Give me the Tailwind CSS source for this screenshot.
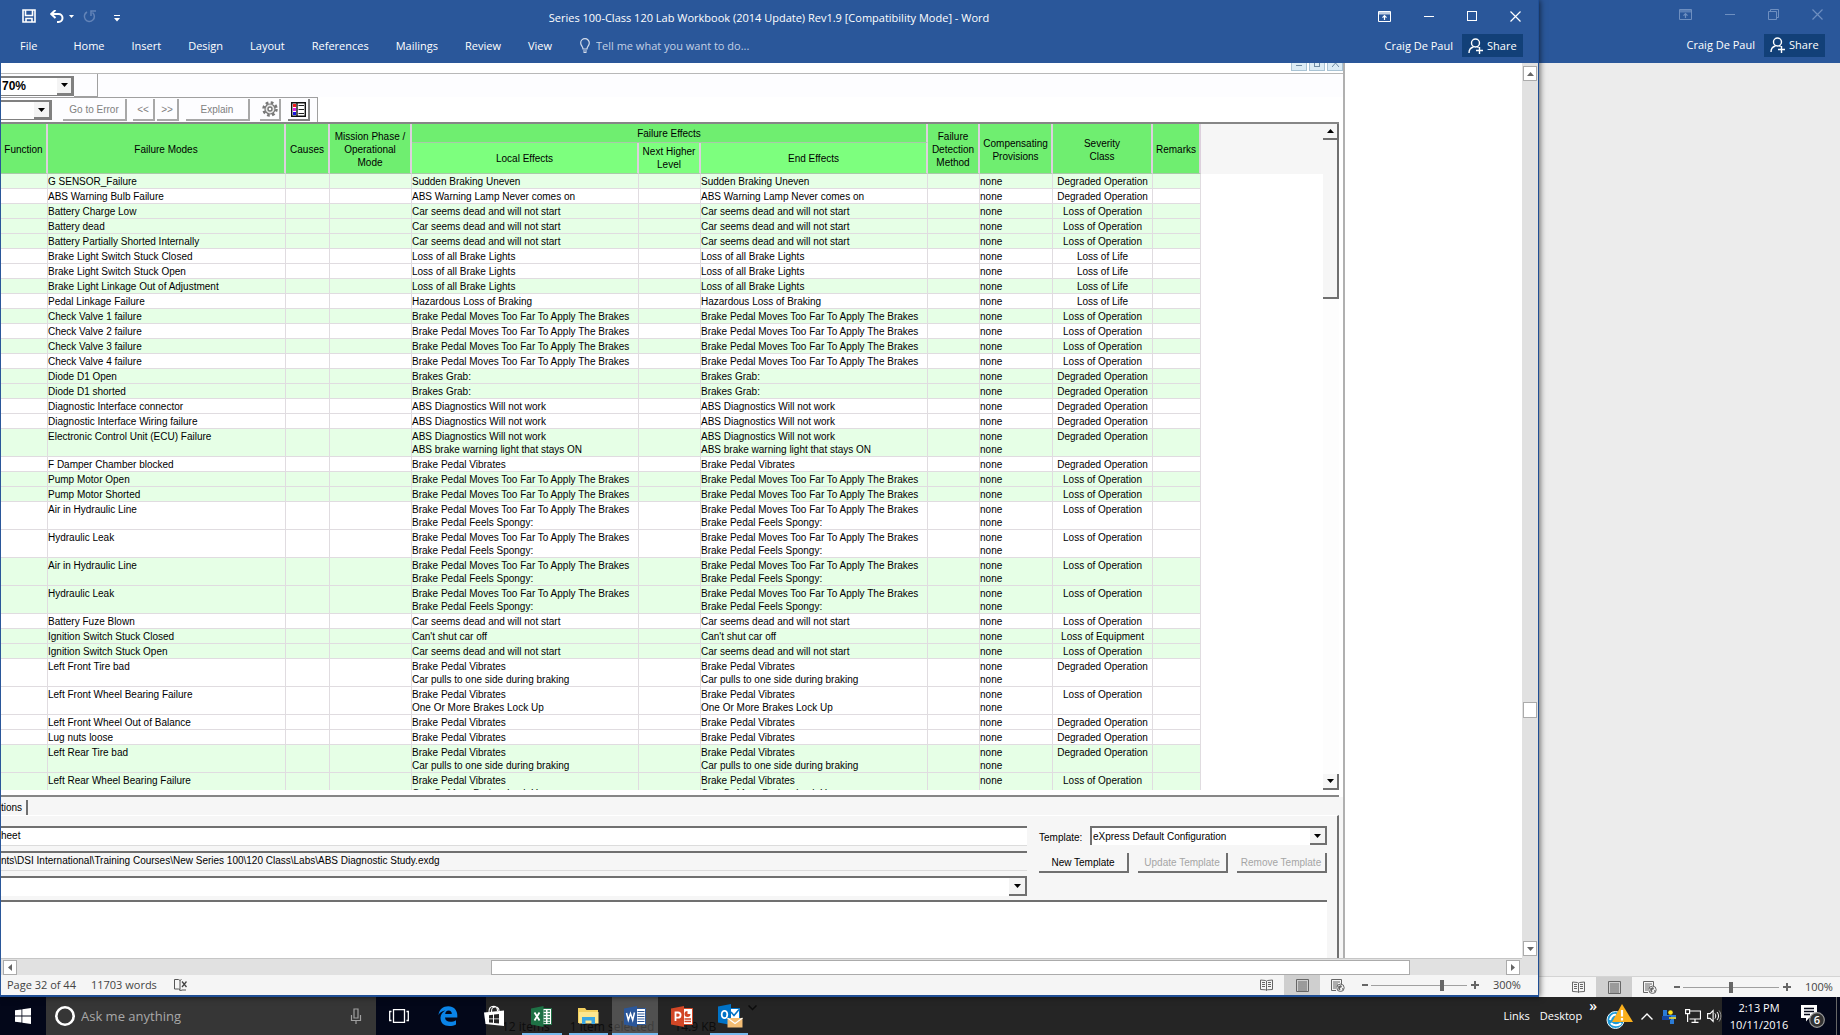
<!DOCTYPE html>
<html lang="en">
<head>
    <meta charset="UTF-8">
    <meta name="viewport" content="width=device-width, initial-scale=1.0">
    <title>Series 100-Class 120 Lab Workbook (2014 Update) Rev1.9 [Compatibility Mode] - Word</title>
    <script src="https://cdn.jsdelivr.net/npm/@tailwindcss/browser@4"></script>
</head>
<body class="h-screen flex flex-col overflow-hidden bg-[#ececec] font-['Open_Sans',sans-serif] text-[11px] leading-4">
    <!-- Shared icons -->
    <svg class="hidden">
        <symbol id="ribbon" viewBox="0 0 13 11"><path d="M.5.5h12v10H.5z" fill="none" stroke="currentColor"/><path d="M1 1h11v2.500H1z" fill="currentColor" opacity=".7"/><path d="M6.500 9V5M4.500 6.700l2-2 2 2" fill="none" stroke="currentColor" stroke-width="1.200"/></symbol>
        <symbol id="close" viewBox="0 0 11 11"><path d="M.5.5l10 10M10.500.5l-10 10" fill="none" stroke="currentColor" stroke-width="1.200"/></symbol>
        <symbol id="person" viewBox="0 0 15 16"><circle cx="7.500" cy="5" r="4" fill="none" stroke="currentColor" stroke-width="1.400"/><path d="M1 15c0-3.500 2-5.500 4.500-6M9 8.500l1.500 1M8 12.500h7M11.500 9v7" fill="none" stroke="currentColor" stroke-width="1.400"/></symbol>
        <symbol id="read" viewBox="0 0 13 12"><path d="M6.500 2v9.500M.5 1l5 .5 1 .7 1-.7 5-.5v9.500l-5 .3-1 .7-1-.7-5-.3zM2 3.500h3M2 5.500h3M2 7.500h3M8 3.500h3M8 5.500h3M8 7.500h3" fill="none" stroke="currentColor"/></symbol>
        <symbol id="print" viewBox="0 0 13 13"><path d="M.5.5h12v12H.5zM2 3h9M2 5h9M2 7h9M2 9h9M2 11h9" fill="none" stroke="currentColor"/></symbol>
        <symbol id="web" viewBox="0 0 14 13"><path d="M5 11.500H.5V.5h10V5M2 3h7M2 5h5M2 7h4M2 9h3" fill="none" stroke="currentColor"/><circle cx="9.500" cy="8.800" r="3.700" fill="none" stroke="currentColor"/><path d="M7 7.500l3-1.500 1 2-2 1 .5 2.500-2-1zM11 9l1.500.5-1 2z" fill="currentColor"/></symbol>
        <symbol id="down" viewBox="0 0 7 4"><path d="M0 0h7L3.500 4z" fill="currentColor"/></symbol>
        <symbol id="up" viewBox="0 0 7 4"><path d="M0 4h7L3.500 0z" fill="currentColor"/></symbol>
    </svg>

    <div class="flex flex-1 min-h-0">
        <!-- Front window -->
        <section class="relative z-10 flex-1 min-w-0 flex flex-col bg-white border-b-2 border-r border-[#1f4e94] shadow-[1px_0_6px_rgba(0,0,0,0.6)]">
            <header class="h-[63px] shrink-0 bg-[#2a579a] text-white flex flex-col">
                <div class="h-8 flex items-center justify-between">
                    <div class="w-[400px] pl-[22px] flex items-center">
                        <button aria-label="Save"><svg class="w-[14px] h-[14px]" viewBox="0 0 14 14"><path d="M1 1h12v12H1zM3.500 1v5.500h7V1M4 13V9.500h6V13" fill="none" stroke="#fff" stroke-width="1.600"/></svg></button>
                        <button class="ml-[14px]" aria-label="Undo"><svg class="w-[14px] h-[13px]" viewBox="0 0 14 13"><path d="M1 4h7.500a4 4 0 0 1 0 8H7" fill="none" stroke="#fff" stroke-width="2"/><path d="M5.500 0L1.200 4l4.300 4" fill="none" stroke="#fff" stroke-width="2"/></svg></button>
                        <svg class="w-[5px] h-[3px] ml-[5px]"><use href="#down"/></svg>
                        <button class="ml-[9px] text-[#6384b8]" aria-label="Repeat"><svg class="w-[13px] h-[13px]" viewBox="0 0 13 13"><path d="M9.500 2.500a5 5 0 1 1-5.500-.500M8 6V1h5" fill="none" stroke="currentColor" stroke-width="1.500"/></svg></button>
                        <svg class="w-[6px] h-[7px] ml-[18px] mt-1" viewBox="0 0 6 7"><path d="M0 .5h6" stroke="#fff"/><path d="M0 3h6L3 6.500z" fill="#fff"/></svg>
                    </div>
                    <h1 class="mt-1 whitespace-nowrap">Series 100-Class 120 Lab Workbook (2014 Update) Rev1.9 [Compatibility Mode] - Word</h1>
                    <div class="w-[400px] pr-[17px] flex items-center justify-end gap-[33px]">
                        <button aria-label="Ribbon options"><svg class="w-[13px] h-[11px]"><use href="#ribbon"/></svg></button>
                        <button aria-label="Minimize" class="w-[10px] h-px bg-white"></button>
                        <button aria-label="Maximize" class="w-[10px] h-[10px] border border-white"></button>
                        <button aria-label="Close"><svg class="w-[11px] h-[11px]"><use href="#close"/></svg></button>
                    </div>
                </div>
                <div class="flex-1 flex items-center pb-1">
                    <nav class="flex gap-[27px] pl-5">
                        <a href="#" class="mr-[9px]">File</a>
                        <a href="#">Home</a>
                        <a href="#">Insert</a>
                        <a href="#">Design</a>
                        <a href="#">Layout</a>
                        <a href="#">References</a>
                        <a href="#">Mailings</a>
                        <a href="#">Review</a>
                        <a href="#">View</a>
                    </nav>
                    <label for="tell" class="ml-7"><svg class="w-[10px] h-[15px]" viewBox="0 0 10 15"><path d="M3 11c0-2.500-2.300-3.200-2.300-6a4.300 4.300 0 0 1 8.600 0c0 2.800-2.300 3.500-2.300 6zM3 13h4M3.500 14.500h3" fill="none" stroke="#d5deec" stroke-width="1.200"/></svg></label>
                    <input id="tell" type="text" placeholder="Tell me what you want to do..." class="ml-[6px] w-[200px] placeholder:text-[#c3d0e5] outline-none">
                    <div class="ml-auto pr-[15px] flex items-center gap-[9px]">
                        <span>Craig De Paul</span>
                        <button class="w-[61px] h-[23px] bg-[#124078] flex items-center gap-1 pl-[6px]"><svg class="w-[15px] h-4"><use href="#person"/></svg>Share</button>
                    </div>
                </div>
            </header>

            <!-- Document area -->
            <div class="flex-1 min-h-0 flex border-l border-[#2a579a]">
                <div class="flex-1 min-w-0 flex flex-col">
                    <div class="flex-1 min-h-0 flex">
                        <!-- Pasted application screen -->
                        <div class="w-[1344px] shrink-0 flex flex-col font-['Liberation_Sans',sans-serif] text-[10px] leading-[13px] text-black border-r-2 border-[#b0b0b0]">
                            <div class="h-[11px] shrink-0 border-b border-[#b8b8b8] flex justify-end gap-[2px] text-[#6f8ba3]">
                                <span class="w-4 h-2 border border-t-0 border-[#a9c3d4] bg-[#dcecf5] flex justify-center"><i class="w-[6px] h-[3px] border-b border-[#6f8ba3]"></i></span>
                                <span class="w-4 h-2 border border-t-0 border-[#a9c3d4] bg-[#dcecf5] flex justify-center"><i class="w-[6px] h-1 border border-t-0 border-[#6f8ba3]"></i></span>
                                <span class="w-4 h-2 border border-t-0 border-[#a9c3d4] bg-[#dcecf5] flex justify-center"><svg class="w-[7px] h-1" viewBox="0 0 7 4"><path d="M0 4l3.500-4L7 4" fill="none" stroke="currentColor"/></svg></span>
                            </div>
                            <div class="h-[23px] shrink-0 flex items-center bg-[#fdfdff]">
                                <div class="relative w-[73px] h-5 border-t-2 border-r-2 border-b border-[#808080] bg-white">
                                    <select aria-label="Zoom" class="appearance-none w-full h-full pl-px text-xs font-bold outline-none"><option>70%</option></select>
                                    <span class="absolute right-0 inset-y-0 w-[15px] bg-[#f4f4f4] border-r border-b-2 border-[#808080] flex items-center justify-center pointer-events-none"><svg class="w-[7px] h-1"><use href="#down"/></svg></span>
                                </div>
                                <span class="w-6 h-full border-r border-b border-[#a0a0a0]"></span>
                            </div>
                            <div class="h-[25px] w-[317px] shrink-0 flex items-center border-t border-r border-[#a0a0a0] bg-[#fdfdff] text-[#808080]">
                                <div class="relative w-[51px] h-5 mr-[11px] border-t-2 border-r-2 border-b border-[#808080] bg-white">
                                    <select aria-label="Error" class="appearance-none w-full h-full outline-none"><option></option></select>
                                    <span class="absolute right-0 inset-y-0 w-4 bg-[#f4f4f4] border-r border-b-2 border-[#808080] flex items-center justify-center text-black pointer-events-none"><svg class="w-[7px] h-1"><use href="#down"/></svg></span>
                                </div>
                                <button class="w-16 h-[22px] mr-[6px] pt-px border-r-2 border-b-2 border-[#a8a8a8] whitespace-nowrap">Go to Error</button>
                                <button class="w-[22px] h-[22px] mr-[2px] border-r-2 border-b-2 border-[#a8a8a8]">&lt;&lt;</button>
                                <button class="w-[22px] h-[22px] mr-[7px] border-r-2 border-b-2 border-[#a8a8a8]">&gt;&gt;</button>
                                <button class="w-16 h-[22px] mr-[10px] pt-px border-r-2 border-b-2 border-[#a8a8a8]">Explain</button>
                                <button aria-label="Settings" class="w-[21px] h-[22px] mr-[7px] border-r-2 border-b-2 border-[#a8a8a8] flex items-center justify-center"><svg class="w-4 h-4" viewBox="0 0 16 16"><circle cx="8" cy="8" r="6.500" fill="none" stroke="#777" stroke-width="2.500" stroke-dasharray="2.700 2.400"/><circle cx="8" cy="8" r="5" fill="#e8e8e8" stroke="#777" stroke-width="1.200"/><circle cx="8" cy="8" r="2" fill="#fff" stroke="#777" stroke-width="1.400"/></svg></button>
                                <button aria-label="Legend" class="w-[22px] h-[22px] border-r-2 border-b-2 border-[#808080] flex items-center justify-center"><svg class="w-[15px] h-[15px]" viewBox="0 0 15 15"><path d="M.7.7h13.600v13.600H.7zM6 .7v13.600" fill="#fff" stroke="#111" stroke-width="1.400"/><path d="M2 2h3v3H2z" fill="#f21c1c"/><path d="M2 6h3v3H2z" fill="#e020e0"/><path d="M2 10h3v3H2z" fill="#1616e0"/><path d="M7.500 3.500H13M7.500 7.500H13M7.500 11.500H13" stroke="#222" stroke-width="1.200"/></svg></button>
                            </div>

                            <!-- FMECA grid -->
                            <div class="flex-1 min-h-0 mr-1 pb-[5px] flex border-t-2 border-b-2 border-[#868686]">
                                <div class="flex-1 min-w-0 overflow-hidden bg-[linear-gradient(#f6f6f6_50px,#fff_50px)]">
                                    <table class="w-[1200px] table-fixed border-separate border-spacing-0">
                                        <colgroup>
                                            <col class="w-[47px]"><col class="w-[238px]"><col class="w-[44px]"><col class="w-[82px]"><col class="w-[227px]"><col class="w-[62px]"><col class="w-[227px]"><col class="w-[52px]"><col class="w-[73px]"><col class="w-[100px]"><col class="w-[48px]">
                                        </colgroup>
                                        <thead class="bg-[#6fee70] [&_th]:p-0 [&_th[rowspan]]:pt-[2px] [&_th]:font-normal [&_th]:border-r-2 [&_th]:border-b [&_th]:border-b-[#a9c9a9] [&_th]:border-r-[#ddd0dd]">
                                            <tr class="h-[19px]">
                                                <th rowspan="2">Function</th>
                                                <th rowspan="2">Failure Modes</th>
                                                <th rowspan="2">Causes</th>
                                                <th rowspan="2">Mission Phase /<br>Operational<br>Mode</th>
                                                <th colspan="3">Failure Effects</th>
                                                <th rowspan="2">Failure<br>Detection<br>Method</th>
                                                <th rowspan="2">Compensating<br>Provisions</th>
                                                <th rowspan="2">Severity<br>Class</th>
                                                <th rowspan="2">Remarks</th>
                                            </tr>
                                            <tr class="h-[31px] bg-[#7dff7e]">
                                                <th>Local Effects</th>
                                                <th>Next Higher<br>Level</th>
                                                <th>End Effects</th>
                                            </tr>
                                        </thead>
                                        <tbody id="grid" class="[&_td]:p-0 [&_td]:pt-px [&_td]:align-top [&_td]:border-r [&_td]:border-b [&_td]:border-[#e0dce0] [&_td]:whitespace-pre"></tbody>
                                    </table>
                                </div>
                                <div class="w-4 shrink-0 flex flex-col bg-[#fdfdfd]">
                                    <button aria-label="Scroll up" class="h-4 border-r-2 border-b-2 border-[#707070] bg-[#f6f6f6] flex items-center justify-center"><svg class="w-[7px] h-1"><use href="#up"/></svg></button>
                                    <span class="h-[159px] border-r-2 border-b-2 border-[#707070] bg-[#f6f6f6]"></span>
                                    <button aria-label="Scroll down" class="h-4 mt-auto border-r-2 border-b-2 border-[#707070] bg-[#f6f6f6] flex items-center justify-center"><svg class="w-[7px] h-1"><use href="#down"/></svg></button>
                                </div>
                            </div>

                            <!-- Worksheet options -->
                            <div class="h-[161px] shrink-0 flex flex-col bg-[#f6f6f6]">
                                <div class="h-[18px] pt-[3px]"><button class="h-[15px] pr-1 border-r-2 border-[#707070]">tions</button></div>
                                <div class="flex-1 mr-1 border-r-2 border-[#707070] border-t border-t-white flex flex-col">
                                    <div class="flex pt-[10px]">
                                        <div class="flex-1 flex flex-col gap-[5px]">
                                            <input aria-label="Name" value="heet" class="h-5 border-t-2 border-t-[#707070] border-b border-b-[#dcdcdc] bg-white pb-[3px] outline-none">
                                            <input aria-label="Path" readonly value="nts\DSI International\Training Courses\New Series 100\120 Class\Labs\ABS Diagnostic Study.exdg" class="h-5 border-t-2 border-t-[#707070] border-b border-b-[#dcdcdc] pb-[3px] outline-none">
                                            <div class="relative h-5 border-t-2 border-r-2 border-t-[#707070] border-[#707070] bg-white">
                                                <select aria-label="Type" class="appearance-none w-full h-full outline-none"><option></option></select>
                                                <span class="absolute right-0 inset-y-0 w-4 bg-[#f4f4f4] border-b-2 border-[#707070] flex items-center justify-center pointer-events-none"><svg class="w-[7px] h-1"><use href="#down"/></svg></span>
                                            </div>
                                        </div>
                                        <div class="w-[288px] ml-3 mr-[10px] flex flex-col gap-2">
                                            <div class="flex items-center">
                                                <label for="template" class="w-[51px] pt-1">Template:</label>
                                                <div class="relative flex-1 h-[19px] border-t-2 border-x-2 border-[#707070] bg-white">
                                                    <select id="template" class="appearance-none w-full h-full pl-px outline-none"><option>eXpress Default Configuration</option></select>
                                                    <span class="absolute right-0 inset-y-0 w-[15px] bg-[#f4f4f4] border-b-2 border-[#707070] flex items-center justify-center pointer-events-none"><svg class="w-[7px] h-1"><use href="#down"/></svg></span>
                                                </div>
                                            </div>
                                            <div class="flex justify-between">
                                                <button class="w-[90px] h-5 border-r-2 border-b-2 border-[#707070] whitespace-nowrap">New Template</button>
                                                <button disabled class="w-[90px] h-5 border-r-2 border-b-2 border-[#707070] text-[#a5a5a5] whitespace-nowrap">Update Template</button>
                                                <button disabled class="w-[90px] h-5 border-r-2 border-b-2 border-[#707070] text-[#a5a5a5] whitespace-nowrap">Remove Template</button>
                                            </div>
                                        </div>
                                    </div>
                                    <textarea aria-label="Notes" class="flex-1 mt-1 mr-[10px] resize-none bg-white border-t-2 border-[#707070] outline-none"></textarea>
                                </div>
                            </div>
                        </div>
                    </div>
                    <!-- Horizontal scroll bar -->
                    <div class="h-[17px] shrink-0 pl-[2px] pr-[2px] flex items-center bg-[#e1e1e1] border-t border-[#c6c6c6]">
                        <button aria-label="Scroll left" class="w-[14px] h-[15px] bg-white border border-[#ababab] flex items-center justify-center"><svg class="w-1 h-[7px]" viewBox="0 0 4 7"><path d="M4 0v7L0 3.500z" fill="#666"/></svg></button>
                        <span class="grow-474"></span>
                        <span class="grow-918 h-[15px] bg-white border border-[#ababab]"></span>
                        <span class="grow-96"></span>
                        <button aria-label="Scroll right" class="w-[14px] h-[15px] bg-white border border-[#ababab] flex items-center justify-center"><svg class="w-1 h-[7px]" viewBox="0 0 4 7"><path d="M0 0v7l4-3.500z" fill="#666"/></svg></button>
                    </div>
                </div>
                <!-- Vertical scroll bar -->
                <div class="w-4 shrink-0 pt-[3px] pb-[19px] px-px flex flex-col bg-[#e1e1e1]">
                    <button aria-label="Scroll up" class="h-[15px] bg-white border border-[#ababab] flex items-center justify-center text-[#666]"><svg class="w-[7px] h-1"><use href="#up"/></svg></button>
                    <span class="grow-622"></span>
                    <span class="h-4 bg-white border border-[#ababab]"></span>
                    <span class="grow-224"></span>
                    <button aria-label="Scroll down" class="h-[15px] bg-white border border-[#ababab] flex items-center justify-center text-[#666]"><svg class="w-[7px] h-1"><use href="#down"/></svg></button>
                </div>
            </div>

            <footer class="h-5 shrink-0 pl-[6px] pr-[19px] flex items-center bg-[#f5f5f5] text-[#444] border-l border-l-[#2a579a]">
                <span>Page 32 of 44</span>
                <span class="ml-[15px]">11703 words</span>
                <svg class="w-[14px] h-3 ml-[17px]" viewBox="0 0 14 12"><path d="M6 10.500L4.500 10H.5V.5h4L6 1.500zM6 1.500L7.500.5M6 10.500v1.500l2-1h4" fill="none" stroke="#555"/><path d="M8 2.500l4.500 5.500M12.500 2.500L8 8" stroke="#444" stroke-width="1.300"/></svg>
                <div class="ml-auto flex items-center text-[#666]">
                    <button aria-label="Read mode" class="w-9 h-5 flex items-center justify-center"><svg class="w-[13px] h-3"><use href="#read"/></svg></button>
                    <button aria-label="Print layout" class="w-9 h-5 bg-[#cfcfcf] flex items-center justify-center"><svg class="w-[13px] h-[13px]"><use href="#print"/></svg></button>
                    <button aria-label="Web layout" class="w-9 h-5 flex items-center justify-center"><svg class="w-[14px] h-[13px]"><use href="#web"/></svg></button>
                    <button aria-label="Zoom out" class="w-[6px] h-[2px] ml-[6px] mr-[3px] bg-[#666]"></button>
                    <input type="range" aria-label="Zoom" value="75" class="appearance-none w-24 h-[11px] bg-[linear-gradient(#a0a0a0,#a0a0a0)] bg-[length:100%_1px] bg-center bg-no-repeat [&::-webkit-slider-thumb]:appearance-none [&::-webkit-slider-thumb]:w-1 [&::-webkit-slider-thumb]:h-[11px] [&::-webkit-slider-thumb]:bg-[#666]">
                    <button aria-label="Zoom in" class="ml-1 mr-[14px]"><svg class="w-2 h-2" viewBox="0 0 8 8"><path d="M0 4h8M4 0v8" stroke="#666" stroke-width="2"/></svg></button>
                    <span class="w-[26px] text-right text-[#444]">300%</span>
                </div>
            </footer>
        </section>

        <!-- Window behind -->
        <section class="w-[301px] shrink-0 flex flex-col">
            <header class="h-[63px] shrink-0 bg-[#2a579a] text-white flex flex-col">
                <div class="h-[31px] pr-[17px] pb-[2px] flex items-center justify-end gap-[33px] text-[#6e8fc0]">
                    <button aria-label="Ribbon options"><svg class="w-[13px] h-[11px]"><use href="#ribbon"/></svg></button>
                    <button aria-label="Minimize" class="w-[10px] h-px bg-[#6e8fc0]"></button>
                    <button aria-label="Restore"><svg class="w-[11px] h-[11px]" viewBox="0 0 11 11"><path d="M.5 2.500h8v8h-8zM2.500 2.500v-2h8v8h-2" fill="none" stroke="currentColor"/></svg></button>
                    <button aria-label="Close"><svg class="w-[11px] h-[11px]"><use href="#close"/></svg></button>
                </div>
                <div class="flex-1 pb-1 pr-[15px] flex items-center justify-end gap-[9px]">
                    <span>Craig De Paul</span>
                    <button class="w-[61px] h-[23px] bg-[#124078] flex items-center gap-1 pl-[6px]"><svg class="w-[15px] h-4"><use href="#person"/></svg>Share</button>
                </div>
            </header>
            <main class="flex-1 bg-[#ececec]"></main>
            <footer class="h-[21px] pr-[9px] flex items-center justify-end bg-[#f5f5f5] text-[#666] border-t border-[#d4d4d4]">
                <button aria-label="Read mode" class="w-9 h-5 flex items-center justify-center"><svg class="w-[13px] h-3"><use href="#read"/></svg></button>
                <button aria-label="Print layout" class="w-9 h-5 bg-[#cfcfcf] flex items-center justify-center"><svg class="w-[13px] h-[13px]"><use href="#print"/></svg></button>
                <button aria-label="Web layout" class="w-9 h-5 flex items-center justify-center"><svg class="w-[14px] h-[13px]"><use href="#web"/></svg></button>
                <button aria-label="Zoom out" class="w-[6px] h-[2px] ml-[6px] mr-[3px] bg-[#666]"></button>
                <input type="range" aria-label="Zoom" value="50" class="appearance-none w-24 h-[11px] bg-[linear-gradient(#a0a0a0,#a0a0a0)] bg-[length:100%_1px] bg-center bg-no-repeat [&::-webkit-slider-thumb]:appearance-none [&::-webkit-slider-thumb]:w-1 [&::-webkit-slider-thumb]:h-[11px] [&::-webkit-slider-thumb]:bg-[#666]">
                <button aria-label="Zoom in" class="ml-1 mr-[14px]"><svg class="w-2 h-2" viewBox="0 0 8 8"><path d="M0 4h8M4 0v8" stroke="#666" stroke-width="2"/></svg></button>
                <span class="w-[26px] text-right text-[#444]">100%</span>
            </footer>
        </section>
    </div>

    <!-- Taskbar -->
    <footer class="h-[38px] shrink-0 flex bg-[#030719] text-white">
        <button aria-label="Start" class="w-[46px] flex items-center justify-center"><svg class="w-4 h-4" viewBox="0 0 16 16"><path d="M0 2.300L6.500 1.400v6.200H0zM7.300 1.300L16 0v7.600H7.300zM0 8.400h6.500v6.200L0 13.700zM7.300 8.400H16V16l-8.700-1.300z" fill="#fff"/></svg></button>
        <div class="w-[330px] pl-2 pr-[14px] flex items-center bg-[#363636]">
            <svg class="w-[22px] h-[22px]" viewBox="0 0 22 22"><circle cx="11" cy="11" r="8.700" fill="none" stroke="#fff" stroke-width="2.600"/></svg>
            <input type="text" aria-label="Search" placeholder="Ask me anything" class="flex-1 pl-[5px] text-[13px] placeholder:text-[#a8a8a8] outline-none">
            <svg class="w-3 h-4" viewBox="0 0 12 16"><path d="M4 1h4v9H4zM1.500 7v5.500h9V7M6 12.500V16" fill="none" stroke="#a0a0a0" stroke-width="1.200"/></svg>
        </div>
        <button aria-label="Task view" class="w-[46px] flex items-center justify-center"><svg class="w-5 h-[14px]" viewBox="0 0 20 14"><path d="M4.500.7h11v12.600h-11zM2.500 2.500H.7v9h1.800M17.500 2.500h1.800v9h-1.800" fill="none" stroke="#fff" stroke-width="1.300"/></svg></button>
        <button aria-label="Edge" class="w-16 pl-4 flex items-center"><svg class="w-5 h-5" viewBox="0 0 20 20"><path d="M.5 9C1.200 3.500 5 .2 10.300.2c5.500 0 9 4 9 8.800v2.500H7c.2 3 2.500 4.300 5.300 4.300 2.200 0 4-.5 5.700-1.500v4.200c-2 1-4.200 1.500-6.800 1.500-5.200 0-8.700-3-8.700-8 0-3.500 2-6.300 5-7.500C4 5 1.800 6.500.5 9zm6.700-1h6.600c0-2-1.100-3.400-3.200-3.400S7.500 6 7.200 8z" fill="#0a84e8"/></svg></button>
        <div class="relative flex-1 bg-[#252525] flex">
            <div class="absolute left-4 bottom-0 flex gap-5 text-[12px] text-[#0c0c0c]"><span>12 items</span><span>1 item selected</span><span>14.9 KB</span></div>
            <svg class="absolute left-[262px] top-2 w-[9px] h-[6px]" viewBox="0 0 9 6"><path d="M.5.5l4 4 4-4" fill="none" stroke="#0c0c0c" stroke-width="1.500"/></svg>
            <button aria-label="Store" class="relative w-7 flex items-center"><svg class="w-5 h-[22px] -ml-[2px]" viewBox="0 0 20 22"><path d="M0 7.500L20 5.500V21L1.500 19z" fill="#fff"/><path d="M5 7C5 3 7 1.200 9.500 1.200S13.500 3 13.500 6M7.500 7c0-4 1-5 4-5s3.500 2 3.500 4" fill="none" stroke="#fff" stroke-width="1.100"/><path d="M5 10.200l4-.5v3.800H5zM10 9.600l5-.6v4.500h-5zM5 14.300h4v3.500l-4-.4zM10 14.300h5V18.500l-5-.6z" fill="#252525"/></svg></button>
            <button aria-label="Excel" class="relative w-[47px] ml-2 pl-[9px] flex items-center"><svg class="w-[21px] h-[21px]" viewBox="0 0 21 21"><path d="M11 2.500h9.500v16H11z" fill="#fff" stroke="#1e7145"/><path d="M12.500 5H15M16.500 5H19M12.500 8H15M16.500 8H19M12.500 11H15M16.500 11H19M12.500 14H15M16.500 14H19M12.500 16.500H15M16.500 16.500H19" stroke="#1e7145" stroke-width="1.600"/><path d="M0 2.500L12.500 0v21L0 18.500z" fill="#1e7145"/><path d="M3.500 6.500l5 8M8.500 6.500l-5 8" stroke="#fff" stroke-width="1.800"/></svg><span class="absolute left-0 bottom-0 w-10 h-[2px] bg-[#76b9ed]"></span></button>
            <button aria-label="Explorer" class="relative w-[43px] pl-[9px] flex items-center"><svg class="w-[21px] h-[18px]" viewBox="0 0 21 18"><path d="M0 1h7l1.500 2H20v13H0z" fill="#f3cf5e"/><path d="M1 5h19.500v11.500H1z" fill="#fce68f"/><path d="M4 17V10h13v7h-3.500v-3.500h-6V17z" fill="#3aa7e4"/></svg><span class="absolute left-0 bottom-0 w-[39px] h-[2px] bg-[#76b9ed]"></span></button>
            <button aria-label="Word" class="relative w-[46px] bg-white/20 flex items-center justify-center"><svg class="w-[22px] h-[21px]" viewBox="0 0 22 21"><path d="M11 2.500h10.500v16H11z" fill="#fff" stroke="#2b579a"/><path d="M13.500 5.500h7M13.500 8h7M13.500 10.500h7M13.500 13h7M13.500 15.500h7" stroke="#2b579a"/><path d="M0 2.500L13 0v21L0 18.500z" fill="#2b579a"/><path d="M2.500 7l1.800 7L6.500 7.500l2.200 6.500L10.500 6.500" fill="none" stroke="#fff" stroke-width="1.500"/></svg><span class="absolute inset-x-0 bottom-0 h-[2px] bg-[#76b9ed]"></span></button>
            <button aria-label="PowerPoint" class="relative w-[50px] pl-[13px] flex items-center"><svg class="w-[22px] h-[21px]" viewBox="0 0 22 21"><path d="M11 2.500h10.500v16H11z" fill="#fff" stroke="#d24726"/><circle cx="16.500" cy="8" r="3" fill="#d24726"/><path d="M16.500 8V4.500H20V8z" fill="#fff"/><path d="M13.500 13h6.500M13.500 15.500h6.500" stroke="#d24726" stroke-width="1.300"/><path d="M0 2.500L13 0v21L0 18.500z" fill="#d24726"/><path d="M4.500 15V6.500H7a2.500 2.500 0 0 1 0 5.200H4.500" fill="none" stroke="#fff" stroke-width="1.800"/></svg></button>
            <button aria-label="Outlook" class="relative w-[46px] pl-[10px] flex items-center"><svg class="w-[25px] h-6" viewBox="0 0 25 24"><path d="M11 4.500h10.500v12H11z" fill="#fff" stroke="#0072c6"/><path d="M13 8l3 3.500 5-6" fill="none" stroke="#0072c6" stroke-width="1.600"/><path d="M0 2.500L13 0v21L0 18.500z" fill="#0072c6"/><ellipse cx="6.500" cy="10.500" rx="2.800" ry="3.700" fill="none" stroke="#fff" stroke-width="1.800"/><path d="M9.500 14H24.500v9.500H9.500z" fill="#f3bd74"/><path d="M9.500 14l7.500 5.500 7.500-5.500" fill="none" stroke="#fff" stroke-width="1.100"/></svg><span class="absolute left-[2px] bottom-0 w-[38px] h-[2px] bg-[#76b9ed]"></span></button>
            <div class="ml-auto flex items-center">
                <span>Links</span>
                <span class="ml-[10px]">Desktop</span>
                <span class="ml-[7px] mb-5 text-[14px] font-semibold">»</span>
                <svg class="ml-[9px] w-[27px] h-[27px]" viewBox="0 0 27 27"><circle cx="9.500" cy="17" r="8.500" fill="#1c9ad8" stroke="#e8f6fc"/><path d="M4 17c1-4 4-6 6-5M5 20c2 3 8 3 10 0" fill="none" stroke="#fff" stroke-width="2"/><path d="M16 1L27 19H6z" fill="#fbb01c"/><path d="M16 7v6.500M16 15v2.500" stroke="#fff" stroke-width="2.200"/></svg>
                <svg class="ml-2 w-3 h-[7px]" viewBox="0 0 12 7"><path d="M.5 6.500L6 1l5.500 5.500" fill="none" stroke="#fff" stroke-width="1.400"/></svg>
                <svg class="ml-[9px] w-[15px] h-[15px]" viewBox="0 0 15 15"><path d="M1 1h4v5h9v4h-2v5H8v-5H1z" fill="#2b7bd6"/><path d="M0 7h9v4H0z" fill="#1546a0"/><circle cx="8.500" cy="3.500" r="2.300" fill="#ffe11a"/><path d="M7 9h7" stroke="#ffe11a" stroke-width="1.500"/></svg>
                <svg class="ml-2 w-4 h-[14px]" viewBox="0 0 16 14"><path d="M4 2h11.500v8H4.500M10 10v3M6.500 13.300h7M.6.6h4v4h-4zM2.600 4.600V13" fill="none" stroke="#fff" stroke-width="1.200"/></svg>
                <svg class="ml-[6px] w-[15px] h-[14px]" viewBox="0 0 15 14"><path d="M.6 4.600h2.500l3-3v10.800l-3-3H.6z" fill="none" stroke="#fff" stroke-width="1.100"/><path d="M8 4.500c1 1.500 1 3.500 0 5M10 3c2 2.500 2 5.500 0 8" fill="none" stroke="#fff"/><path d="M12 1.500c2.500 3 2.500 8 0 11" fill="none" stroke="#999"/></svg>
            </div>
        </div>
        <div class="w-[74px] flex flex-col justify-center text-center leading-[17px]"><span>2:13 PM</span><span>10/11/2016</span></div>
        <button aria-label="Notifications" class="w-10 pl-[5px] flex items-center"><svg class="w-6 h-6" viewBox="0 0 24 24"><path d="M0 1h16v13H8l-3 3.500V14H0z" fill="#fff"/><path d="M3 4.500h10M3 7.500h10M3 10.500h6" stroke="#030719" stroke-width="1.300"/><circle cx="16" cy="16" r="7.300" fill="#333" stroke="#9a9a9a" stroke-width="1.200"/><text x="16" y="20" text-anchor="middle" font-size="11" font-weight="600" fill="#fff">6</text></svg></button>
        <span class="w-1 border-l border-[#666]"></span>
    </footer>

    <script>
        const FAR = 'Brake Pedal Moves Too Far To Apply The Brakes';
        const DEAD = 'Car seems dead and will not start';
        const LIGHTS = 'Loss of all Brake Lights';
        const DIAG = 'ABS Diagnostics Will not work';
        const SPONGY = FAR + '\nBrake Pedal Feels Spongy:';
        const VIB = 'Brake Pedal Vibrates';
        const SIDE = VIB + '\nCar pulls to one side during braking';
        const LOCK = VIB + '\nOne Or More Brakes Lock Up';
        const DEG = 'Degraded Operation', OP = 'Loss of Operation', LIFE = 'Loss of Life';

        // failure mode, effect, severity, shaded row
        const rows = [
            ['G SENSOR_Failure', 'Sudden Braking Uneven', DEG, 1],
            ['ABS Warning Bulb Failure', 'ABS Warning Lamp Never comes on', DEG, 0],
            ['Battery Charge Low', DEAD, OP, 1],
            ['Battery dead', DEAD, OP, 1],
            ['Battery Partially Shorted Internally', DEAD, OP, 1],
            ['Brake Light Switch Stuck Closed', LIGHTS, LIFE, 0],
            ['Brake Light Switch Stuck Open', LIGHTS, LIFE, 0],
            ['Brake Light Linkage Out of Adjustment', LIGHTS, LIFE, 1],
            ['Pedal Linkage Failure', 'Hazardous Loss of Braking', LIFE, 0],
            ['Check Valve 1 failure', FAR, OP, 1],
            ['Check Valve 2 failure', FAR, OP, 0],
            ['Check Valve 3 failure', FAR, OP, 1],
            ['Check Valve 4 failure', FAR, OP, 0],
            ['Diode D1 Open', 'Brakes Grab:', DEG, 1],
            ['Diode D1 shorted', 'Brakes Grab:', DEG, 1],
            ['Diagnostic Interface connector', DIAG, DEG, 0],
            ['Diagnostic Interface Wiring failure', DIAG, DEG, 0],
            ['Electronic Control Unit (ECU) Failure', DIAG + '\nABS brake warning light that stays ON', DEG, 1],
            ['F Damper Chamber blocked', VIB, DEG, 0],
            ['Pump Motor Open', FAR, OP, 1],
            ['Pump Motor Shorted', FAR, OP, 1],
            ['Air in Hydraulic Line', SPONGY, OP, 0],
            ['Hydraulic Leak', SPONGY, OP, 0],
            ['Air in Hydraulic Line', SPONGY, OP, 1],
            ['Hydraulic Leak', SPONGY, OP, 1],
            ['Battery Fuze Blown', DEAD, OP, 0],
            ['Ignition Switch Stuck Closed', "Can't shut car off", 'Loss of Equipment', 1],
            ['Ignition Switch Stuck Open', DEAD, OP, 1],
            ['Left Front Tire bad', SIDE, DEG, 0],
            ['Left Front Wheel Bearing Failure', LOCK, OP, 0],
            ['Left Front Wheel Out of Balance', VIB, DEG, 0],
            ['Lug nuts loose', VIB, DEG, 0],
            ['Left Rear Tire bad', SIDE, DEG, 1],
            ['Left Rear Wheel Bearing Failure', LOCK, OP, 1]
        ];

        document.getElementById('grid').innerHTML = rows.map(([mode, effect, severity, shaded]) => {
            const none = effect.split('\n').map(() => 'none').join('\n');
            return `<tr class="${shaded ? 'bg-[#e6ffe6]' : 'bg-white'}"><td></td><td>${mode}</td><td></td><td></td><td>${effect}</td><td></td><td>${effect}</td><td></td><td>${none}</td><td class="text-center">${severity}</td><td></td></tr>`;
        }).join('');
    </script>
</body>
</html>
